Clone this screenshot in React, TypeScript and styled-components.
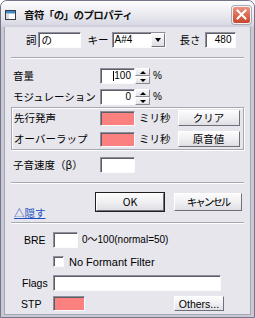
import React from "react";
import styled, { createGlobalStyle, css } from "styled-components";

const GlobalStyle = createGlobalStyle`
  html, body { margin: 0; padding: 0; background: #ffffff; }
  body { font-family: "Noto Sans CJK JP", "Noto Sans", sans-serif; }
  * { box-sizing: border-box; }
`;

const JP = `"Noto Sans CJK JP", "Noto Sans", sans-serif`;
const LAT = `"Liberation Sans", "Noto Sans CJK JP", sans-serif`;

const Window = styled.div`
  width: 255px;
  height: 318px;
  display: flex;
  flex-direction: column;
  background: #c9c9d6;
  border: 1px solid #74748a;
  border-radius: 7px 7px 0 0;
  overflow: hidden;
`;

const TitleBar = styled.div`
  height: 26px;
  flex: none;
  display: flex;
  align-items: center;
  padding: 0 3px 0 4px;
  background: linear-gradient(#fdfdfe 0%, #eeeef3 40%, #dcdce6 85%, #cfcfdc 100%);
`;

const TitleIcon = styled.svg`
  width: 11px;
  height: 10px;
  margin: 2px 8px 0 0;
  flex: none;
`;

const TitleText = styled.div`
  flex: 1;
  font-family: ${JP};
  font-weight: bold;
  font-size: 10.5px;
  letter-spacing: -0.6px;
  color: #111;
  line-height: 14px;
  margin-top: 2px;
`;

const CloseButton = styled.div`
  width: 19px;
  height: 18px;
  margin-top: 1px;
  border-radius: 3px;
  border: 1px solid #f4f4f8;
  background: linear-gradient(#ec9682 0%, #dc6a52 50%, #c8462f 100%);
  box-shadow: 0 0 0 1px #a9a9b8;
  display: flex;
  align-items: center;
  justify-content: center;
`;

const Body = styled.div`
  flex: 1;
  margin: 0 3px 2px 3px;
  background: #e6e6ec;
  border-left: 1px solid #a6a6b6;
  border-right: 1px solid #a6a6b6;
  border-bottom: 1px solid #a6a6b6;
  display: flex;
  flex-direction: column;
  padding-top: 5px;
  font-family: ${JP};
  font-size: 10.5px;
  color: #000;
`;

const Row = styled.div<{ $mt?: number; $pl?: number; $h?: number }>`
  display: flex;
  align-items: center;
  height: ${(p) => p.$h ?? 16}px;
  margin-top: ${(p) => p.$mt ?? 0}px;
  padding-left: ${(p) => p.$pl ?? 8}px;
  flex: none;
`;

const Text = styled.span<{ $w?: number; $ml?: number; $mr?: number; $lat?: boolean; $size?: number }>`
  font-family: ${(p) => (p.$lat ? LAT : JP)};
  font-size: ${(p) => p.$size ?? 10.5}px;
  line-height: 14px;
  white-space: nowrap;
  margin-left: ${(p) => p.$ml ?? 0}px;
  margin-right: ${(p) => p.$mr ?? 0}px;
  ${(p) =>
    p.$w !== undefined &&
    css`
      width: ${p.$w}px;
      flex: none;
    `}
`;

const sunken = css`
  border: 1px solid;
  border-color: #8f8f9c #fbfbfd #fbfbfd #8f8f9c;
  box-shadow: inset 1px 1px 0 #5d5d68;
`;

const Field = styled.div<{ $w: number; $h?: number; $pink?: boolean; $align?: string; $ml?: number }>`
  ${sunken};
  width: ${(p) => p.$w}px;
  height: ${(p) => p.$h ?? 16}px;
  flex: none;
  margin-left: ${(p) => p.$ml ?? 0}px;
  background: ${(p) => (p.$pink ? "#fb8080" : "#ffffff")};
  display: flex;
  align-items: center;
  justify-content: ${(p) => p.$align ?? "flex-start"};
  padding: 0 3px 0 3px;
  font-family: ${LAT};
  font-size: 10px;
  line-height: 12px;
  overflow: hidden;
`;

const JpValue = styled.span`
  font-family: ${JP};
  font-size: 10.5px;
  line-height: 12px;
`;

const Caret = styled.span`
  width: 1px;
  height: 10px;
  background: #000;
  margin-right: 0px;
`;

const Spinner = styled.div`
  width: 15px;
  height: 16px;
  flex: none;
  display: flex;
  flex-direction: column;
`;

const SpinHalf = styled.div`
  flex: 1;
  background: linear-gradient(#fafafc, #e0e0e6);
  border: 1px solid;
  border-color: #ffffff #8a8a96 #8a8a96 #ffffff;
  display: flex;
  align-items: center;
  justify-content: center;
`;

const Tri = styled.div<{ $down?: boolean }>`
  width: 0;
  height: 0;
  border-left: 3px solid transparent;
  border-right: 3px solid transparent;
  ${(p) =>
    p.$down
      ? css`
          border-top: 3px solid #000;
        `
      : css`
          border-bottom: 3px solid #000;
        `}
`;

const Select = styled.div`
  ${sunken};
  width: 54px;
  height: 16px;
  flex: none;
  background: #fff;
  display: flex;
  align-items: center;
  padding-left: 2px;
  font-family: ${LAT};
  font-size: 10px;
`;

const SelectValue = styled.span`
  flex: 1;
  line-height: 12px;
`;

const DropButton = styled.div`
  width: 14px;
  height: 14px;
  background: linear-gradient(#fafafc, #dedee6);
  border: 1px solid;
  border-color: #ffffff #74747e #74747e #ffffff;
  display: flex;
  align-items: center;
  justify-content: center;
  & > div {
    border-left-width: 3.5px;
    border-right-width: 3.5px;
    border-top-width: 4px;
  }
`;

const Separator = styled.div<{ $mt: number }>`
  height: 2px;
  margin: ${(p) => p.$mt}px 6px 0 6px;
  border-top: 1px solid #a8a8b4;
  border-bottom: 1px solid #ffffff;
  flex: none;
`;

const Group = styled.div`
  margin: 2px 6px 0 6px;
  height: 43px;
  border: 1px solid #a8a8b4;
  box-shadow: inset 1px 1px 0 #ffffff, 1px 1px 0 #ffffff;
  padding: 2px 0 0 2px;
  display: flex;
  flex-direction: column;
  gap: 5px;
  flex: none;
`;

const GroupRow = styled.div`
  display: flex;
  align-items: center;
  height: 16px;
`;

const Button = styled.div<{ $w: number; $h?: number; $default?: boolean; $ml?: number; $tight?: boolean }>`
  width: ${(p) => p.$w}px;
  height: ${(p) => p.$h ?? 16}px;
  margin-left: ${(p) => p.$ml ?? 0}px;
  flex: none;
  background: linear-gradient(#fbfbfc 0%, #f0f0f3 50%, #dedee4 100%);
  border: 1px solid;
  border-color: #ffffff #6f6f7b #6f6f7b #ffffff;
  ${(p) =>
    p.$default &&
    css`
      outline: 1px solid #202020;
      outline-offset: 0px;
      border-color: #ffffff #6f6f7b #6f6f7b #ffffff;
    `}
  display: flex;
  align-items: center;
  justify-content: center;
  font-family: ${JP};
  font-size: 10.5px;
  line-height: 12px;
  letter-spacing: ${(p) => (p.$tight ? "-2px" : "0")};
  color: #000;
`;

const ButtonRow = styled.div`
  display: flex;
  height: 26px;
  margin-top: 9px;
  padding-left: 9px;
  flex: none;
`;

const HideLink = styled.span`
  align-self: flex-end;
  width: 82px;
  font-family: ${JP};
  font-size: 10.5px;
  line-height: 13px;
  color: #1f4fc4;
  text-decoration: underline;
  text-underline-offset: 1px;
`;

const CheckBox = styled.div`
  ${sunken};
  width: 11px;
  height: 11px;
  background: #fff;
  flex: none;
`;

export default function App() {
  return (
    <>
      <GlobalStyle />
      <Window>
        <TitleBar>
          <TitleIcon viewBox="0 0 11 10">
            <rect x="0.5" y="0.5" width="10" height="9" fill="#ffffff" stroke="#3a3a4a" />
            <rect x="1" y="1" width="9" height="2.5" fill="#3c8cc8" />
            <rect x="1" y="4" width="3" height="5" fill="#d8d8e0" />
          </TitleIcon>
          <TitleText>音符「の」のプロパティ</TitleText>
          <CloseButton>
            <svg width="11" height="11" viewBox="0 0 11 11">
              <path d="M1.5 1.5 L9.5 9.5 M9.5 1.5 L1.5 9.5" stroke="#ffffff" strokeWidth="2" strokeLinecap="square" />
            </svg>
          </CloseButton>
        </TitleBar>
        <Body>
          <Row $pl={21}>
            <Text $mr={1}>詞</Text>
            <Field $w={43}>
              <JpValue>の</JpValue>
            </Field>
            <Text $ml={7} $mr={3}>キー</Text>
            <Select>
              <SelectValue>A#4</SelectValue>
              <DropButton>
                <Tri $down />
              </DropButton>
            </Select>
            <Text $ml={14} $mr={4}>長さ</Text>
            <Field $w={31} $align="flex-end">480</Field>
          </Row>
          <Separator $mt={9} />
          <Row $mt={9}>
            <Text $w={87}>音量</Text>
            <Field $w={35} $align="flex-end">
              <Caret />
              100
            </Field>
            <Spinner>
              <SpinHalf>
                <Tri />
              </SpinHalf>
              <SpinHalf>
                <Tri $down />
              </SpinHalf>
            </Spinner>
            <Text $ml={3} $lat $size={10}>%</Text>
          </Row>
          <Row $mt={5}>
            <Text $w={87}>モジュレーション</Text>
            <Field $w={35} $align="flex-end">0</Field>
            <Spinner>
              <SpinHalf>
                <Tri />
              </SpinHalf>
              <SpinHalf>
                <Tri $down />
              </SpinHalf>
            </Spinner>
            <Text $ml={3} $lat $size={10}>%</Text>
          </Row>
          <Group>
            <GroupRow>
              <Text $w={86}>先行発声</Text>
              <Field $w={35} $h={15} $pink />
              <Text $ml={4}>ミリ秒</Text>
              <Button $w={62} $ml={7}>クリア</Button>
            </GroupRow>
            <GroupRow>
              <Text $w={86}>オーバーラップ</Text>
              <Field $w={35} $h={15} $pink />
              <Text $ml={4}>ミリ秒</Text>
              <Button $w={62} $ml={7}>原音値</Button>
            </GroupRow>
          </Group>
          <Row $mt={7}>
            <Text $w={87}>子音速度（β）</Text>
            <Field $w={35} />
          </Row>
          <Separator $mt={9} />
          <ButtonRow>
            <HideLink>△隠す</HideLink>
            <Button $w={68} $h={18} $default>OK</Button>
            <Button $w={68} $h={18} $ml={10} $tight>キャンセル</Button>
          </ButtonRow>
          <Separator $mt={3} />
          <Row $mt={8} $pl={19}>
            <Text $w={29} $lat $size={10.5}>BRE</Text>
            <Field $w={25} />
            <Text $ml={4} $lat $size={10}>0〜100(normal=50)</Text>
          </Row>
          <Row $mt={8} $h={11} $pl={48}>
            <CheckBox />
            <Text $ml={5} $lat $size={11}>No Formant Filter</Text>
          </Row>
          <Row $mt={8} $pl={17}>
            <Text $w={31} $lat $size={10.5}>Flags</Text>
            <Field $w={168} />
          </Row>
          <Row $mt={5} $h={15} $pl={16}>
            <Text $w={32} $lat $size={10.5}>STP</Text>
            <Field $w={32} $h={15} $pink />
            <Button $w={50} $h={15} $ml={89}>
              <Text $lat $size={10.5}>Others...</Text>
            </Button>
          </Row>
        </Body>
      </Window>
    </>
  );
}
